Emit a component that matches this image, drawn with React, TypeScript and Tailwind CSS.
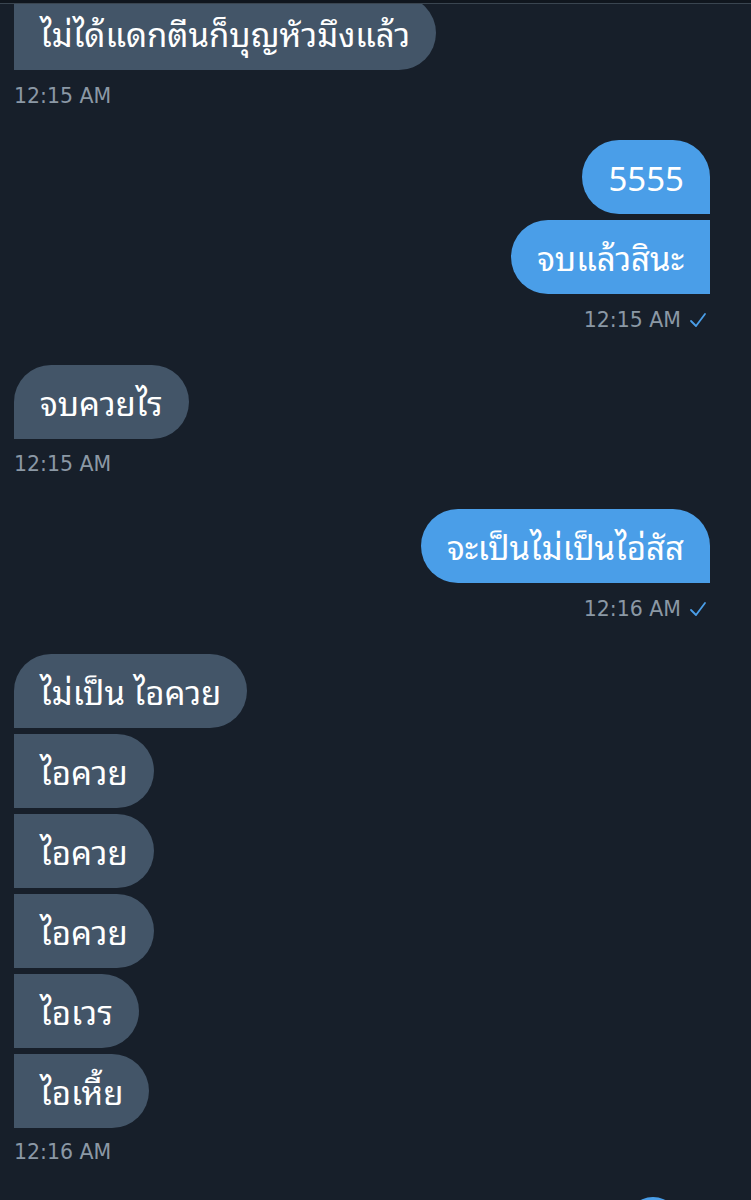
import React from 'react';

type Msg = { text: string; corners: string };

const font = { fontFamily: "'Noto Sans Thai Looped', 'Noto Sans Thai', Thonburi, Loma, 'Liberation Sans', sans-serif" };

const Check = () => (
    <svg width="18" height="16" viewBox="0 0 18 16" className="ml-[8px]">
        <polyline points="2,9 7,14 16,2" fill="none" stroke="#4a9ee8" strokeWidth="1.8" strokeLinecap="round" strokeLinejoin="round" />
    </svg>
);

const Stamp = ({ time, mine }: { time: string; mine?: boolean }) => (
    <div className={`flex items-center h-[24px] text-[20.5px] text-[#8b98a5] ${mine ? 'justify-end pr-[44px]' : 'pl-[14px]'}`} style={{ fontFamily: "'DejaVu Sans', sans-serif" }}>
        <span>{time}</span>
        {mine && <Check />}
    </div>
);

const Bubble = ({ text, corners, mine }: { text: string; corners: string; mine?: boolean }) => (
    <div
        className={`h-[74px] flex items-center px-[26px] text-[33px] text-white whitespace-nowrap ${corners} ${mine ? 'bg-[#4a9ee8]' : 'bg-[#435568]'}`}
        style={font}
    >
        {text}
    </div>
);

const App: React.FC = () => {
    const leftGroup: Msg[] = [
        { text: 'ไม่เป็น ไอควย', corners: 'rounded-tl-[37px] rounded-r-[37px]' },
        { text: 'ไอควย', corners: 'rounded-r-[37px]' },
        { text: 'ไอควย', corners: 'rounded-r-[37px]' },
        { text: 'ไอควย', corners: 'rounded-r-[37px]' },
        { text: 'ไอเวร', corners: 'rounded-r-[37px]' },
        { text: 'ไอเหี้ย', corners: 'rounded-r-[37px]' },
    ];

    return (
        <div className="w-[751px] h-[1200px] overflow-hidden bg-[#171f2a]">
            {/* top divider */}
            <div className="h-[3px] bg-[#10161e]" />
            <div className="h-[1px] bg-[#3a4550]" />

            {/* cut-off first message */}
            <div className="h-[66px] overflow-hidden flex flex-col justify-end items-start pl-[14px]">
                <div className="shrink-0">
                    <Bubble text="ไม่ได้แดกตีนก็บุญหัวมึงแล้ว" corners="rounded-r-[37px]" />
                </div>
            </div>
            <div className="mt-[14px]">
                <Stamp time="12:15 AM" />
            </div>

            {/* mine */}
            <div className="mt-[32px] flex flex-col items-end gap-[6px] pr-[41px]">
                <Bubble text="5555" corners="rounded-l-[37px] rounded-tr-[37px]" mine />
                <Bubble text="จบแล้วสินะ" corners="rounded-l-[37px]" mine />
            </div>
            <div className="mt-[14px]">
                <Stamp time="12:15 AM" mine />
            </div>

            <div className="mt-[33px] flex flex-col items-start pl-[14px]">
                <Bubble text="จบควยไร" corners="rounded-tl-[37px] rounded-r-[37px]" />
            </div>
            <div className="mt-[13px]">
                <Stamp time="12:15 AM" />
            </div>

            <div className="mt-[33px] flex flex-col items-end pr-[41px]">
                <Bubble text="จะเป็นไม่เป็นไอ่สัส" corners="rounded-l-[37px] rounded-tr-[37px]" mine />
            </div>
            <div className="mt-[14px]">
                <Stamp time="12:16 AM" mine />
            </div>

            <div className="mt-[33px] flex flex-col items-start gap-[6px] pl-[14px]">
                {leftGroup.map((m, i) => (
                    <Bubble key={i} text={m.text} corners={m.corners} />
                ))}
            </div>
            <div className="mt-[12px]">
                <Stamp time="12:16 AM" />
            </div>

            {/* next message peeking in */}
            <div className="mt-[33px] flex justify-end pr-[70px]">
                <div className="w-[56px] h-[40px] rounded-t-[28px] bg-[#4a9ee8]" />
            </div>
        </div>
    );
};

export default App;
